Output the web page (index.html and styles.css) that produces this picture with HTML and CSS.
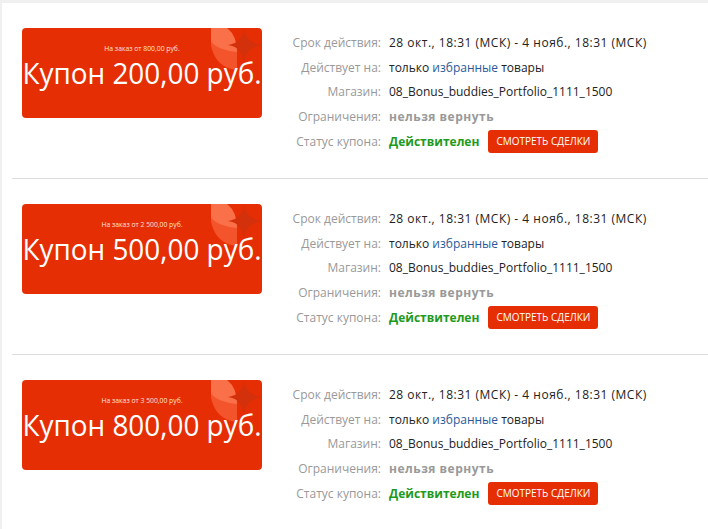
FILE: index.html
```html
<!DOCTYPE html>
<html lang="ru">
<head>
<meta charset="utf-8">
<link rel="stylesheet" href="styles.css">
</head>
<body>
<div class="page">
  <div class="coupon-row">
    <div class="card">
      <svg class="deco" width="52" height="44" viewBox="0 0 52 44">
        <path d="M1 0 H17 Q27 8 27 24 V42 Q6 40 1 18 Z" fill="#f4542c"/>
        <path d="M1 0 H17 Q27 8 27 24 Q8 22 1 14 Z" fill="#fa7048"/>
        <path d="M34 1 Q36 15 52 17 Q36 19 34 34 Q32 19 18 17 Q32 15 34 1 Z" fill="#d2310c"/>
      </svg>
      <div class="cond">На заказ от 800,00 руб.</div>
      <div class="amount">Купон 200,00 руб.</div>
    </div>
    <div class="info">
      <div class="line"><span class="lbl">Срок действия:</span><span class="val date">28 окт., 18:31 (МСК) - 4 нояб., 18:31 (МСК)</span></div>
      <div class="line"><span class="lbl">Действует на:</span><span class="val">только <span class="link">избранные</span> товары</span></div>
      <div class="line"><span class="lbl">Магазин:</span><span class="val">08_Bonus_buddies_Portfolio_1111_1500</span></div>
      <div class="line"><span class="lbl">Ограничения:</span><span class="val muted">нельзя вернуть</span></div>
      <div class="line"><span class="lbl">Статус купона:</span><span class="val ok">Действителен</span><button class="btn">СМОТРЕТЬ СДЕЛКИ</button></div>
    </div>
  </div>
  <div class="coupon-row">
    <div class="card">
      <svg class="deco" width="52" height="44" viewBox="0 0 52 44">
        <path d="M1 0 H17 Q27 8 27 24 V42 Q6 40 1 18 Z" fill="#f4542c"/>
        <path d="M1 0 H17 Q27 8 27 24 Q8 22 1 14 Z" fill="#fa7048"/>
        <path d="M34 1 Q36 15 52 17 Q36 19 34 34 Q32 19 18 17 Q32 15 34 1 Z" fill="#d2310c"/>
      </svg>
      <div class="cond">На заказ от 2 500,00 руб.</div>
      <div class="amount">Купон 500,00 руб.</div>
    </div>
    <div class="info">
      <div class="line"><span class="lbl">Срок действия:</span><span class="val date">28 окт., 18:31 (МСК) - 4 нояб., 18:31 (МСК)</span></div>
      <div class="line"><span class="lbl">Действует на:</span><span class="val">только <span class="link">избранные</span> товары</span></div>
      <div class="line"><span class="lbl">Магазин:</span><span class="val">08_Bonus_buddies_Portfolio_1111_1500</span></div>
      <div class="line"><span class="lbl">Ограничения:</span><span class="val muted">нельзя вернуть</span></div>
      <div class="line"><span class="lbl">Статус купона:</span><span class="val ok">Действителен</span><button class="btn">СМОТРЕТЬ СДЕЛКИ</button></div>
    </div>
  </div>
  <div class="coupon-row">
    <div class="card">
      <svg class="deco" width="52" height="44" viewBox="0 0 52 44">
        <path d="M1 0 H17 Q27 8 27 24 V42 Q6 40 1 18 Z" fill="#f4542c"/>
        <path d="M1 0 H17 Q27 8 27 24 Q8 22 1 14 Z" fill="#fa7048"/>
        <path d="M34 1 Q36 15 52 17 Q36 19 34 34 Q32 19 18 17 Q32 15 34 1 Z" fill="#d2310c"/>
      </svg>
      <div class="cond">На заказ от 3 500,00 руб.</div>
      <div class="amount">Купон 800,00 руб.</div>
    </div>
    <div class="info">
      <div class="line"><span class="lbl">Срок действия:</span><span class="val date">28 окт., 18:31 (МСК) - 4 нояб., 18:31 (МСК)</span></div>
      <div class="line"><span class="lbl">Действует на:</span><span class="val">только <span class="link">избранные</span> товары</span></div>
      <div class="line"><span class="lbl">Магазин:</span><span class="val">08_Bonus_buddies_Portfolio_1111_1500</span></div>
      <div class="line"><span class="lbl">Ограничения:</span><span class="val muted">нельзя вернуть</span></div>
      <div class="line"><span class="lbl">Статус купона:</span><span class="val ok">Действителен</span><button class="btn">СМОТРЕТЬ СДЕЛКИ</button></div>
    </div>
  </div>
</div>
</body>
</html>
```
FILE: styles.css
```css
html, body {
  margin: 0;
  padding: 0;
  background: #fff;
}
body {
  font-family: "Open Sans", "Liberation Sans", sans-serif;
  color: #222;
}
.page {
  border-top: 3px solid #f0f0f0;
  border-left: 2px solid #f0f0f0;
  padding-left: 10px;
  min-height: 526px;
}
.coupon-row {
  display: flex;
  align-items: flex-start;
  padding: 25px 0 0 10px;
  height: 150px;
  border-bottom: 1px solid #dcdcdc;
}
.coupon-row:last-child {
  border-bottom: none;
}
.card {
  position: relative;
  width: 240px;
  height: 90px;
  background: #e62e04;
  border-radius: 4px;
  color: #fff;
  text-align: center;
  overflow: hidden;
  flex: none;
}
.deco {
  position: absolute;
  right: 0;
  top: 0;
}
.cond {
  position: relative;
  margin-top: 16px;
  font-size: 8px;
  line-height: 8px;
  color: #ffe1d6;
  transform: scaleX(0.85);
}
.amount {
  position: relative;
  font-size: 30px;
  line-height: 41px;
  white-space: nowrap;
  transform: scaleX(0.93);
  margin-left: -20px;
  margin-right: -20px;
}
.info {
  margin-left: 27px;
  padding-top: 2px;
  font-size: 12px;
}
.line {
  display: flex;
  align-items: center;
  height: 24.75px;
  white-space: nowrap;
}
.lbl {
  width: 92px;
  text-align: right;
  color: #999;
  margin-right: 8px;
  flex: none;
}
.val {
  color: #222;
}
.date {
  letter-spacing: 0.5px;
}
.link {
  color: #2a5a9a;
}
.muted {
  color: #999;
  font-weight: 700;
  letter-spacing: 0.5px;
}
.ok {
  color: #1e9a1e;
  font-weight: 700;
}
.btn {
  margin-left: 9px;
  background: #e62e04;
  color: #fff;
  border: none;
  border-radius: 3px;
  height: 23px;
  width: 110px;
  font-family: inherit;
  font-size: 10px;
  padding: 0;
}
```
